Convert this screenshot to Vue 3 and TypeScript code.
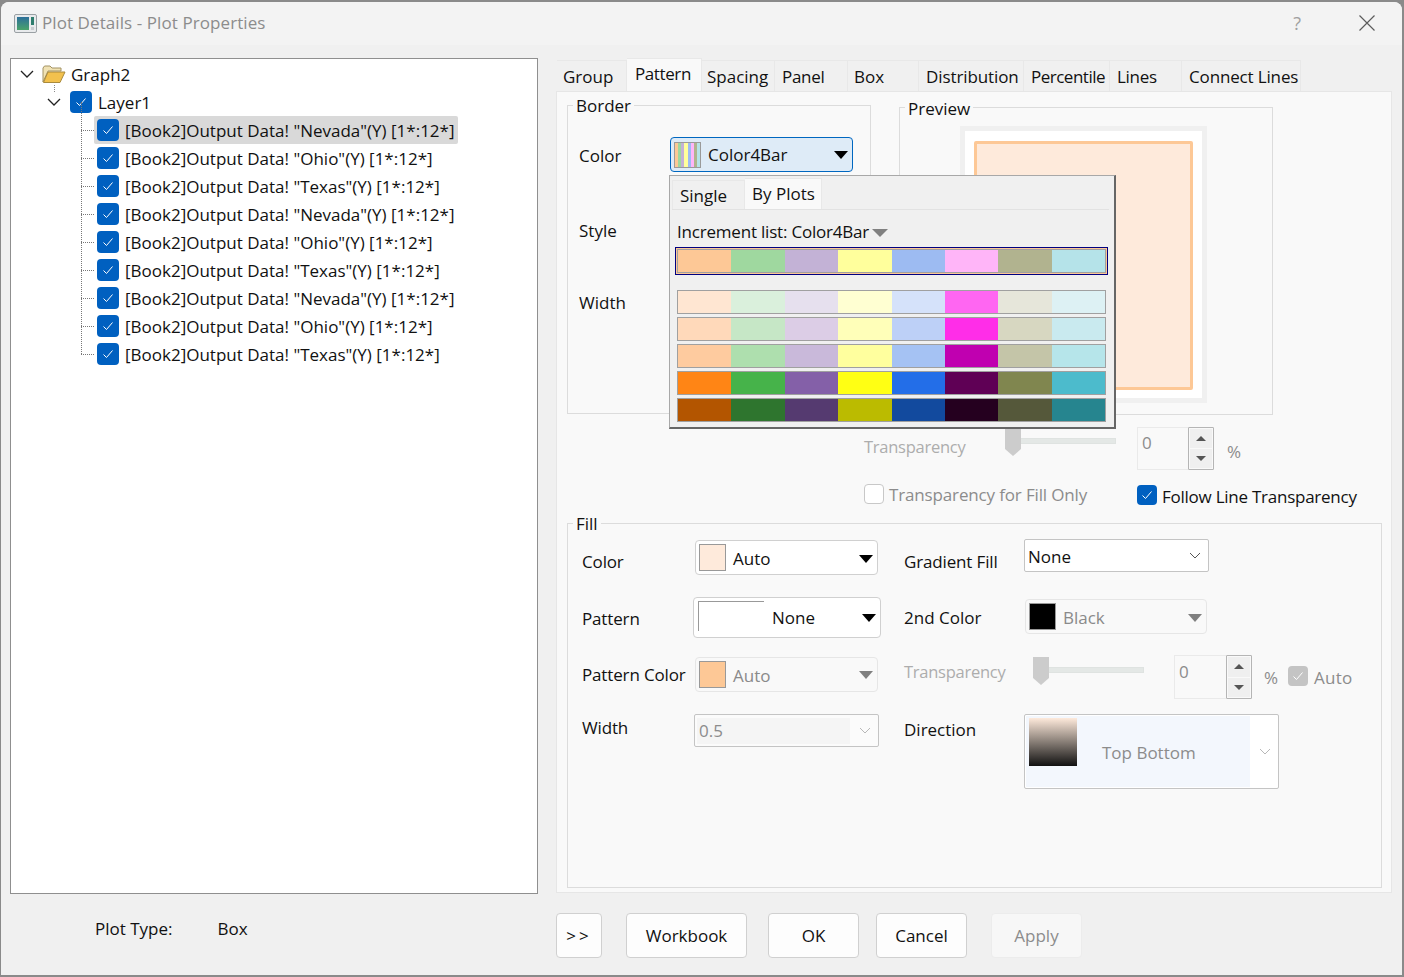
<script setup lang="ts">
const plots = ['Nevada', 'Ohio', 'Texas', 'Nevada', 'Ohio', 'Texas', 'Nevada', 'Ohio', 'Texas']

const tabs = [
  { name: 'Group', width: 70, pad: 6, track: 0 },
  { name: 'Pattern', width: 75, pad: 8, track: -0.4 },
  { name: 'Spacing', width: 73, pad: 5, track: 0 },
  { name: 'Panel', width: 73, pad: 7, track: -0.3 },
  { name: 'Box', width: 71, pad: 6, track: 0 },
  { name: 'Distribution', width: 105, pad: 7, track: -0.1 },
  { name: 'Percentile', width: 86, pad: 7, track: -0.5 },
  { name: 'Lines', width: 72, pad: 7, track: -0.3 },
  { name: 'Connect Lines', width: 119, pad: 7, track: -0.15 }
]

const incrementColors = ['#fdc896', '#9fd89f', '#c3b2d6', '#ffff9c', '#9dbbf2', '#ffb5f8', '#b1b38f', '#b5e3e9']

const colorRows = [
  ['#ffe6d2', '#daf0dc', '#e6e0ee', '#ffffd2', '#d5e2fa', '#ff66f2', '#e6e6da', '#ddf1f4'],
  ['#ffd9ba', '#c6e7c6', '#dccde6', '#ffffb9', '#bdd0f7', '#ff2de8', '#d7d7c1', '#c9eaef'],
  ['#fecb9f', '#aedfae', '#c9b9da', '#ffff9e', '#a5c2f3', '#c000b0', '#c4c5a8', '#b6e5ea'],
  ['#ff8515', '#46b34a', '#8460a8', '#ffff14', '#236ee8', '#5f0055', '#80864f', '#4cbbcc'],
  ['#b35500', '#2e752e', '#553a70', '#bbbb00', '#124a9e', '#25001f', '#55583a', '#26858f']
]
</script>

<template>
  <div class="page">
    <div class="dialog">
      <header class="titlebar">
        <svg class="app-icon" width="23" height="19" viewBox="0 0 23 19">
          <rect x="0.5" y="0.5" width="22" height="18" rx="1.5" fill="#e8eaec" stroke="#9aa0a4" />
          <defs>
            <linearGradient id="plotGrad" x1="0" y1="0" x2="0" y2="1">
              <stop offset="0" stop-color="#2c6f9a" />
              <stop offset="1" stop-color="#4aa36a" />
            </linearGradient>
          </defs>
          <rect x="3" y="3" width="12" height="13" fill="url(#plotGrad)" />
          <rect x="17" y="3" width="3" height="8" fill="#2f7d6e" />
          <rect x="17" y="13" width="3" height="3" fill="#c9ccd0" />
        </svg>
        <span class="title-text">Plot Details - Plot Properties</span>
        <span class="help">?</span>
        <svg class="close" width="16" height="16" viewBox="0 0 16 16">
          <path d="M0.5 0.5 L15.5 15.5 M15.5 0.5 L0.5 15.5" stroke="#5c5c5c" stroke-width="1.2" fill="none" />
        </svg>
      </header>

      <div class="content">
        <aside class="left-col">
          <div class="tree">
            <div class="tree-row root">
              <svg class="chevron" width="14" height="8" viewBox="0 0 14 8">
                <path d="M1 1 L7 7 L13 1" stroke="#222" stroke-width="1.3" fill="none" />
              </svg>
              <svg class="folder" width="24" height="20" viewBox="0 0 24 20">
                <path d="M1 18 V4 L2.5 2 H8 L10 4 H19 V7 H6 Z" fill="#f0e2b4" stroke="#a39263" />
                <path d="M1.5 18.5 L6 8 H23 L18 18.5 Z" fill="#f2c14e" stroke="#a98a3c" />
              </svg>
              <span>Graph2</span>
            </div>
            <div class="tree-row layer">
              <svg class="chevron" width="14" height="8" viewBox="0 0 14 8">
                <path d="M1 1 L7 7 L13 1" stroke="#222" stroke-width="1.3" fill="none" />
              </svg>
              <span class="check">
                <svg width="12" height="10" viewBox="0 0 12 10"><path d="M1.5 5.5 L4.5 8.5 L10.5 1.5" stroke="#fff" stroke-width="1" fill="none" /></svg>
              </span>
              <span>Layer1</span>
            </div>
            <div
              v-for="(plot, i) in plots"
              :key="i"
              class="tree-row plot"
              :class="{ selected: i === 0 }"
            >
              <span class="check">
                <svg width="12" height="10" viewBox="0 0 12 10"><path d="M1.5 5.5 L4.5 8.5 L10.5 1.5" stroke="#fff" stroke-width="1" fill="none" /></svg>
              </span>
              <span>[Book2]Output Data! "{{ plot }}"(Y) [1*:12*]</span>
            </div>
          </div>
          <div class="plot-type">
            <span>Plot Type:</span>
            <span class="plot-type-value">Box</span>
          </div>
        </aside>

        <main class="right-col">
          <nav class="tabs">
            <div
              v-for="tab in tabs"
              :key="tab.name"
              class="tab"
              :class="{ active: tab.name === 'Pattern' }"
              :style="{ width: tab.width + 'px', paddingLeft: tab.pad + 'px', letterSpacing: tab.track + 'px' }"
            >{{ tab.name }}</div>
          </nav>

          <section class="panel">
            <div class="top-row">
              <div class="group border-group">
                <span class="legend">Border</span>
                <div class="border-row color-row">
                  <span class="border-label">Color</span>
                  <div class="combo focused">
                    <span class="mini-bars">
                      <i v-for="c in incrementColors" :key="c" :style="{ background: c }"></i>
                    </span>
                    <span class="combo-text">Color4Bar</span>
                    <span class="tri"></span>
                  </div>
                </div>
                <div class="border-label style-label">Style</div>
                <div class="border-label width-label">Width</div>
              </div>
              <div class="group preview-group">
                <span class="legend">Preview</span>
                <div class="preview-outer">
                  <div class="preview-inner">
                    <div class="preview-box"></div>
                  </div>
                </div>
              </div>
            </div>

            <div class="transp-row">
              <span class="disabled-label">Transparency</span>
              <div class="slider">
                <span class="thumb"></span>
              </div>
              <div class="spin">
                <span class="spin-value">0</span>
                <div class="spin-btns">
                  <span class="spin-btn"><i class="up"></i></span>
                  <span class="spin-btn"><i class="down"></i></span>
                </div>
              </div>
              <span class="percent">%</span>
            </div>

            <div class="check-row">
              <span class="check-empty"></span>
              <span class="muted only-label">Transparency for Fill Only</span>
              <span class="check small follow-check">
                <svg width="12" height="10" viewBox="0 0 12 10"><path d="M1.5 5.5 L4.5 8.5 L10.5 1.5" stroke="#fff" stroke-width="1" fill="none" /></svg>
              </span>
              <span class="follow-label">Follow Line Transparency</span>
            </div>

            <div class="group fill-group">
              <span class="legend">Fill</span>
              <div class="fill-left">
                <div class="fill-row row-color">
                  <span class="fill-label">Color</span>
                  <div class="combo plain auto-combo">
                    <span class="swatch" style="background: #feeadb"></span>
                    <span class="combo-text low">Auto</span>
                    <span class="tri"></span>
                  </div>
                </div>
                <div class="fill-row row-pattern">
                  <span class="fill-label">Pattern</span>
                  <div class="combo plain pattern-combo">
                    <span class="pattern-swatch"></span>
                    <span class="combo-text">None</span>
                    <span class="tri"></span>
                  </div>
                </div>
                <div class="fill-row row-pcolor">
                  <span class="fill-label">Pattern Color</span>
                  <div class="combo off auto-combo">
                    <span class="swatch" style="background: #fdc896"></span>
                    <span class="combo-text low">Auto</span>
                    <span class="tri gray"></span>
                  </div>
                </div>
                <div class="fill-row row-width">
                  <span class="fill-label">Width</span>
                  <div class="select width-select">
                    <span class="select-inner">0.5</span>
                    <svg class="sel-chev" width="12" height="7" viewBox="0 0 12 7"><path d="M1 1 L6 6 L11 1" stroke="#b8b8b8" fill="none" /></svg>
                  </div>
                </div>
              </div>

              <div class="fill-right">
                <div class="fill-row row-gradient">
                  <span class="fill-label r">Gradient Fill</span>
                  <div class="select gradient-select">
                    <span class="select-text">None</span>
                    <svg class="sel-chev" width="12" height="7" viewBox="0 0 12 7"><path d="M1 1 L6 6 L11 1" stroke="#555" fill="none" /></svg>
                  </div>
                </div>
                <div class="fill-row row-second">
                  <span class="fill-label r">2nd Color</span>
                  <div class="combo off second-combo">
                    <span class="swatch" style="background: #000"></span>
                    <span class="combo-text low">Black</span>
                    <span class="tri gray"></span>
                  </div>
                </div>
                <div class="fill-row row-transp">
                  <span class="disabled-label r">Transparency</span>
                  <div class="slider short">
                    <span class="thumb"></span>
                  </div>
                  <div class="spin">
                    <span class="spin-value">0</span>
                    <div class="spin-btns">
                      <span class="spin-btn"><i class="up"></i></span>
                      <span class="spin-btn"><i class="down"></i></span>
                    </div>
                  </div>
                  <span class="percent">%</span>
                  <span class="check small grey">
                    <svg width="12" height="10" viewBox="0 0 12 10"><path d="M1.5 5.5 L4.5 8.5 L10.5 1.5" stroke="#fff" stroke-width="1" fill="none" /></svg>
                  </span>
                  <span class="muted auto-label">Auto</span>
                </div>
                <div class="fill-row row-direction">
                  <span class="fill-label r">Direction</span>
                  <div class="direction-select">
                    <div class="direction-inner">
                      <span class="gradient-swatch"></span>
                      <span class="direction-text">Top Bottom</span>
                    </div>
                    <svg class="sel-chev" width="12" height="7" viewBox="0 0 12 7"><path d="M1 1 L6 6 L11 1" stroke="#b8b8b8" fill="none" /></svg>
                  </div>
                </div>
              </div>
            </div>
          </section>

          <footer class="buttons">
            <button class="btn b-more">&gt;&gt;</button>
            <button class="btn b-workbook">Workbook</button>
            <button class="btn b-ok">OK</button>
            <button class="btn b-cancel">Cancel</button>
            <button class="btn b-apply">Apply</button>
          </footer>

          <div class="popup">
            <div class="popup-tabs">
              <span class="popup-tab">Single</span>
              <span class="popup-tab on">By Plots</span>
            </div>
            <div class="increment-label">
              <span>Increment list: Color4Bar</span>
              <span class="tri gray inc-tri"></span>
            </div>
            <div class="increment-bar">
              <div class="color-strip">
                <span v-for="c in incrementColors" :key="c" :style="{ background: c }"></span>
              </div>
            </div>
            <div class="color-rows">
              <div v-for="(row, r) in colorRows" :key="r" class="color-strip boxed">
                <span v-for="c in row" :key="c" :style="{ background: c }"></span>
              </div>
            </div>
          </div>
        </main>
      </div>
    </div>
  </div>
</template>

<style>
html, body {
  margin: 0;
  background: #8a8a8a;
}
</style>

<style scoped>
* {
  box-sizing: border-box;
}

.page {
  width: 1404px;
  height: 977px;
  padding: 2px 2px 2px 1px;
  font-family: "Open Sans", "Noto Sans", sans-serif;
  font-size: 17px;
  color: #111;
  overflow: hidden;
}

.dialog {
  width: 100%;
  height: 100%;
  background: #f0f0f0;
  border-radius: 8px 8px 0 0;
  display: flex;
  flex-direction: column;
  overflow: hidden;
}

.titlebar {
  height: 43px;
  flex: none;
  background: #f3f3f3;
  display: flex;
  align-items: center;
  padding: 0 0 2px 13px;
  position: relative;
}

.app-icon {
  flex: none;
  margin-top: 1px;
}

.title-text {
  margin-left: 5px;
  color: #8c8c8c;
  letter-spacing: 0.08px;
}

.help {
  margin-left: auto;
  color: #a0a0a0;
  font-size: 18px;
}

.close {
  margin: 0 27px 0 58px;
}

.content {
  flex: 1;
  display: flex;
  min-height: 0;
  position: relative;
}

.left-col {
  width: 555px;
  flex: none;
  padding: 13px 0 0 9px;
}

.tree {
  width: 528px;
  height: 836px;
  background: #fff;
  border: 1px solid #8f8f8f;
  padding-top: 1px;
}

.tree-row {
  height: 28px;
  display: flex;
  align-items: center;
  position: relative;
  white-space: nowrap;
}

.root {
  padding-left: 9px;
}

.root .folder {
  margin-left: 8px;
  margin-right: 5px;
}

.root::after {
  content: "";
  position: absolute;
  left: 43px;
  top: 25px;
  height: 7px;
  border-left: 1px dotted #888;
}

.layer {
  padding-left: 36px;
}

.layer .chevron {
  margin-right: 9px;
}

.layer .check {
  margin-right: 6px;
}

.plot {
  margin-left: 83px;
  width: fit-content;
  padding: 0 3px 0 3px;
  border-radius: 2px;
}

.plot::before {
  content: "";
  position: absolute;
  left: -13px;
  top: 14px;
  width: 13px;
  border-top: 1px dotted #777;
}

.plot::after {
  content: "";
  position: absolute;
  left: -13px;
  top: -14px;
  height: 28px;
  border-left: 1px dotted #777;
}

.plot.selected {
  background: #d9d9d9;
}

.plot .check {
  margin-right: 6px;
}

.check {
  width: 22px;
  height: 22px;
  flex: none;
  background: #0060c0;
  border-radius: 4px;
  display: inline-flex;
  align-items: center;
  justify-content: center;
}

.check.small {
  width: 20px;
  height: 20px;
}

.check.grey {
  background: #c4c4c4;
}

.plot-type {
  display: flex;
  margin: 23px 0 0 85px;
}

.plot-type-value {
  margin-left: 45px;
}

.right-col {
  width: 847px;
  flex: none;
  position: relative;
}

.tabs {
  height: 46px;
  padding: 13px 0 0 1px;
  display: flex;
  align-items: flex-end;
}

.tab {
  height: 31px;
  padding-top: 4px;
  background: #f0f0f0;
  border: 1px solid #e8e8e8;
  border-bottom: none;
  border-left: none;
  white-space: nowrap;
}

.tab.active {
  height: 33px;
  background: #f9f9f9;
  padding-top: 3px;
}

.panel {
  width: 836px;
  height: 802px;
  background: #f9f9f9;
  border: 1px solid #e6e6e6;
  padding: 0 10px;
}

.top-row {
  display: flex;
  align-items: flex-start;
  height: 323px;
}

.group {
  position: relative;
  border: 1px solid #dcdcdc;
}

.legend {
  position: absolute;
  left: 5px;
  top: -12px;
  background: #f9f9f9;
  padding: 0 3px;
  line-height: 24px;
}

.preview-group .legend {
  top: -11px;
}

.border-group {
  margin-top: 13px;
  width: 304px;
  height: 309px;
  padding-left: 11px;
}

.preview-group {
  margin: 15px 0 0 28px;
  width: 374px;
  height: 308px;
  padding: 18px 0 0 60px;
}

.preview-outer {
  width: 247px;
  height: 277px;
  background: #f0f0f0;
  padding: 5px 5px;
}

.preview-inner {
  width: 100%;
  height: 100%;
  background: #fff;
  padding: 10px 9px;
}

.preview-box {
  width: 219px;
  height: 249px;
  background: #feeadb;
  border: 3px solid #fdc896;
  border-radius: 2px;
}

.border-row {
  display: flex;
  align-items: center;
}

.color-row {
  margin-top: 31px;
}

.border-label {
  line-height: 24px;
}

.color-row .border-label {
  width: 91px;
  margin-top: 2px;
}

.style-label {
  margin-top: 47px;
}

.width-label {
  margin-top: 48px;
}

.combo {
  display: flex;
  align-items: center;
  position: relative;
  border: 1px solid #d0d0d0;
  border-radius: 4px;
  background: #fff;
  padding-left: 3px;
  height: 35px;
  width: 183px;
  flex: none;
}

.combo.focused {
  background: #deebf7;
  border: 1px solid #0067c0;
}

.combo.off {
  background: #f9f9f9;
  border-color: #e6e6e6;
  color: #8a8a8a;
}

.mini-bars {
  width: 27px;
  height: 26px;
  border: 1px solid #9a9a9a;
  display: flex;
  flex: none;
}

.mini-bars i {
  flex: 1;
}

.combo-text {
  margin-left: 7px;
}

.combo-text.low {
  margin-top: 1px;
}

.tri {
  width: 0;
  height: 0;
  border-left: 7.5px solid transparent;
  border-right: 7.5px solid transparent;
  border-top: 8px solid #000;
  position: absolute;
  right: 4px;
  top: 13px;
}

.tri.gray {
  border-top-color: #808080;
}

.transp-row {
  display: flex;
  align-items: flex-start;
  height: 43px;
  margin-top: 12px;
  padding-left: 297px;
  position: relative;
}

.disabled-label {
  color: #adadad;
  line-height: 24px;
  font-size: 16.5px;
  letter-spacing: -0.25px;
  margin-top: 8px;
  width: 103px;
  flex: none;
}

.slider {
  position: relative;
  width: 111px;
  height: 6px;
  margin: 11px 0 0 38px;
  background: #e4e8e6;
  border: 1px solid #dfe3e1;
  flex: none;
}

.slider.short {
  margin-left: 28px;
}

.thumb {
  position: absolute;
  left: -1px;
  top: -11px;
  width: 16px;
  height: 28px;
  background: #cccccc;
  clip-path: polygon(0 0, 100% 0, 100% 75%, 50% 100%, 0 75%);
}

.spin {
  width: 77px;
  height: 43px;
  margin-left: 21px;
  border: 1px solid #eaeaea;
  display: flex;
  flex: none;
  justify-content: space-between;
  background: #f9f9f9;
}

.spin-value {
  color: #8c8c8c;
  margin: 3px 0 0 4px;
  line-height: 24px;
}

.spin-btns {
  width: 26px;
  margin: -1px -1px -1px 0;
  border: 1px solid #b5b5b5;
  border-radius: 1px;
  display: flex;
  flex-direction: column;
  padding: 1px;
  gap: 1px;
  background: #f9f9f9;
}

.spin-btn {
  flex: 1;
  background: #efefef;
  display: flex;
  align-items: center;
  justify-content: center;
}

.spin-btn i {
  width: 0;
  height: 0;
  border-left: 5px solid transparent;
  border-right: 5px solid transparent;
}

.spin-btn .up {
  border-bottom: 5px solid #555;
}

.spin-btn .down {
  border-top: 5px solid #555;
}

.percent {
  color: #8c8c8c;
  margin: 13px 0 0 13px;
  line-height: 24px;
}

.check-row {
  display: flex;
  align-items: center;
  height: 23px;
  margin-top: 14px;
  padding-left: 297px;
}

.check-empty {
  width: 20px;
  height: 20px;
  border: 1px solid #c8c8c8;
  border-radius: 4px;
  background: #fff;
  flex: none;
  margin-top: -3px;
}

.muted {
  color: #8c8c8c;
}

.only-label {
  margin: -2px 0 0 5px;
  width: 248px;
  flex: none;
  letter-spacing: -0.15px;
}

.follow-check {
  margin-top: -1px;
}

.follow-label {
  margin: 2px 0 0 5px;
  letter-spacing: -0.25px;
}

.fill-group {
  margin-top: 16px;
  width: 815px;
  height: 365px;
  display: flex;
}

.fill-left {
  width: 336px;
  flex: none;
  padding-left: 14px;
}

.fill-right {
  flex: 1;
}

.fill-row {
  display: flex;
  align-items: flex-start;
  position: relative;
}

.fill-label {
  width: 113px;
  flex: none;
  line-height: 24px;
}

.fill-left .fill-label {
  letter-spacing: -0.15px;
}

.fill-label.r {
  width: 120px;
}

.row-gradient .fill-label {
  letter-spacing: -0.15px;
}

.row-color {
  margin-top: 16px;
  height: 35px;
}

.row-color .fill-label {
  margin-top: 10px;
}

.row-color .tri {
  top: 14px;
}

.row-pattern {
  margin-top: 22px;
  height: 41px;
}

.row-pattern .fill-label {
  margin-top: 10px;
  width: 111px;
}

.pattern-combo {
  width: 188px;
  height: 41px;
}

.pattern-combo .combo-text {
  margin-left: 8px;
}

.pattern-combo .tri {
  top: 16px;
}

.pattern-swatch {
  width: 66px;
  height: 30px;
  margin: -3px 0 0 1px;
  background: #fff;
  border-left: 1px solid #999;
  border-top: 1px solid #999;
  flex: none;
}

.row-pcolor {
  margin-top: 19px;
  height: 35px;
}

.row-pcolor .fill-label {
  margin-top: 6px;
}

.row-width {
  margin-top: 22px;
  height: 33px;
}

.row-width .fill-label {
  margin-top: 2px;
  width: 112px;
}

.swatch {
  width: 27px;
  height: 27px;
  border: 1px solid #999;
  flex: none;
}

.select {
  position: relative;
  height: 33px;
  border: 1px solid #c4c4c4;
  border-radius: 2px;
  background: #fff;
  flex: none;
  display: flex;
  align-items: center;
}

.width-select {
  width: 185px;
  background: #fbfbfb;
}

.select-inner {
  width: 153px;
  height: 26px;
  margin-left: 2px;
  background: #f5f5f5;
  color: #8c8c8c;
  padding-left: 2px;
  line-height: 26px;
}

.select-text {
  margin: 1px 0 0 3px;
}

.sel-chev {
  position: absolute;
  right: 7px;
  top: 12px;
}

.row-gradient {
  margin-top: 15px;
  height: 33px;
}

.row-gradient .fill-label {
  margin-top: 11px;
}

.gradient-select {
  width: 185px;
}

.row-second {
  margin-top: 27px;
  height: 35px;
}

.row-second .fill-label {
  margin-top: 7px;
}

.second-combo {
  margin-left: 1px;
  width: 182px;
}

.row-second .tri {
  top: 14px;
}

.row-transp {
  margin-top: 21px;
  height: 44px;
}

.row-transp .disabled-label {
  width: 101px;
  margin-top: 5px;
}

.row-transp .slider {
  margin-top: 12px;
}

.row-transp .spin {
  width: 78px;
  height: 44px;
  margin-left: 30px;
}

.row-transp .spin-value {
  margin-top: 4px;
}

.row-transp .percent {
  margin: 11px 0 0 12px;
}

.row-transp .check {
  margin: 11px 0 0 10px;
}

.auto-label {
  margin: 11px 0 0 6px;
  line-height: 24px;
  letter-spacing: 0.2px;
}

.row-direction {
  margin-top: 15px;
  height: 75px;
}

.row-direction .fill-label {
  margin-top: 4px;
}

.direction-select {
  position: relative;
  width: 255px;
  height: 75px;
  border: 1px solid #c4c4c4;
  border-radius: 2px;
  background: #fff;
  flex: none;
  padding: 1px;
}

.direction-inner {
  width: 224px;
  height: 71px;
  background: #f3f7fd;
  display: flex;
}

.gradient-swatch {
  width: 48px;
  height: 48px;
  margin: 2px 0 0 3px;
  background: linear-gradient(#feeadb, #111);
  flex: none;
}

.direction-text {
  margin: 25px 0 0 25px;
  color: #8c8c8c;
}

.direction-select .sel-chev {
  top: 33px;
}

.buttons {
  position: relative;
  display: flex;
  margin-top: 20px;
}

.btn {
  height: 45px;
  border: 1px solid #d0d0d0;
  border-radius: 4px;
  background: #fdfdfd;
  color: #111;
  font: inherit;
  padding: 0;
}

.b-more {
  width: 46px;
  letter-spacing: 3px;
}

.b-workbook {
  width: 121px;
  margin-left: 24px;
}

.b-ok {
  width: 91px;
  margin-left: 21px;
}

.b-cancel {
  width: 91px;
  margin-left: 17px;
}

.b-apply {
  width: 91px;
  margin-left: 24px;
  background: #f7f7f7;
  border-color: #ececec;
  color: #8c8c8c;
}

/* popup list lies over the border group and the preview */
.popup {
  position: absolute;
  left: 113px;
  top: 130px;
  width: 447px;
  height: 254px;
  background: #f0f0f0;
  border: 1px solid #a8a8a8;
  border-right: 2px solid #666;
  border-bottom: 2px solid #666;
  padding: 3px 5px 0 2px;
}

.popup-tabs {
  display: flex;
  height: 31px;
  align-items: flex-end;
  border-bottom: 1px solid #e2e2e2;
}

.popup-tab {
  width: 73px;
  height: 29px;
  padding-left: 7px;
  line-height: 29px;
  border: 1px solid #e8e8e8;
  border-bottom: none;
}

.popup-tab.on {
  width: 77px;
  height: 31px;
  background: #f9f9f9;
  border-left: none;
  padding-left: 7px;
  line-height: 29px;
}

.increment-label {
  position: relative;
  margin: 10px 0 0 5px;
  line-height: 24px;
  letter-spacing: -0.2px;
}

.inc-tri {
  right: auto;
  left: 195px;
  top: 9px;
  border-left-width: 8.5px;
  border-right-width: 8.5px;
}

.increment-bar {
  margin: 3px 0 0 3px;
  width: 433px;
  height: 28px;
  border: 1px solid #000080;
  padding: 1px;
  background: #fdc896;
}

.increment-bar .color-strip {
  height: 24px;
  border: 1px solid #a0a0a0;
}

.color-strip {
  display: grid;
  grid-template-columns: repeat(8, 1fr);
}

.color-rows {
  margin: 15px 0 0 5px;
  width: 429px;
  display: flex;
  flex-direction: column;
  gap: 3px;
}

.color-strip.boxed {
  height: 24px;
  border: 1px solid #a0a0a0;
}
</style>
